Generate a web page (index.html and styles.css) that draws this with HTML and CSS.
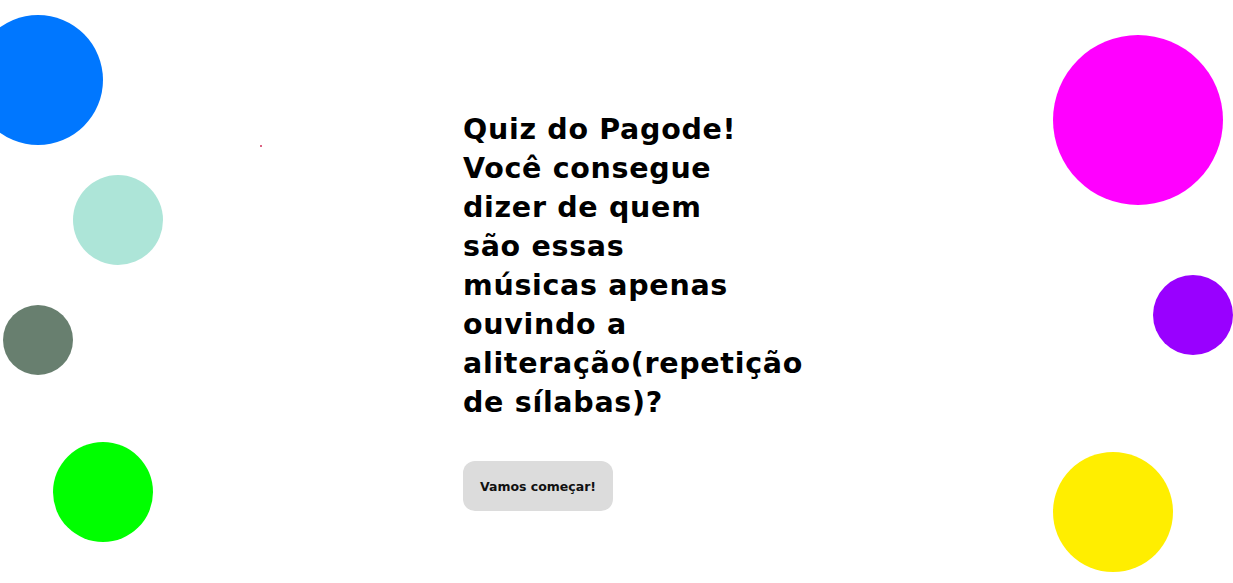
FILE: index.html
```html
<!DOCTYPE html>
<html lang="pt-BR">
<head>
<meta charset="utf-8">
<title>Quiz do Pagode</title>
<link rel="stylesheet" href="styles.css">
</head>
<body>
<div class="decor">
  <span class="ball ball-blue"></span>
  <span class="ball ball-teal"></span>
  <span class="ball ball-gray"></span>
  <span class="ball ball-green"></span>
  <span class="ball ball-magenta"></span>
  <span class="ball ball-purple"></span>
  <span class="ball ball-yellow"></span>
  <span class="dot"></span>
</div>
<main class="intro">
  <h1 class="title">Quiz do Pagode!<br>Você consegue<br>dizer de quem<br>são essas<br>músicas apenas<br>ouvindo a<br>aliteração(repetição<br>de sílabas)?</h1>
  <button class="start">Vamos começar!</button>
</main>
</body>
</html>
```
FILE: styles.css
```css
html, body {
  margin: 0;
  padding: 0;
  background: #fff;
  height: 100%;
  overflow: hidden;
}
body {
  font-family: "DejaVu Sans", "Open Sans", sans-serif;
  color: #000;
  position: relative;
}
.decor {
  position: absolute;
  inset: 0;
  pointer-events: none;
}
.ball {
  position: absolute;
  border-radius: 50%;
  display: block;
}
.ball-blue { left: -27px; top: 15px; width: 130px; height: 130px; background: #0077ff; }
.ball-teal { left: 73px; top: 175px; width: 90px; height: 90px; background: #ade5d8; }
.ball-gray { left: 3px; top: 305px; width: 70px; height: 70px; background: #687f6f; }
.ball-green { left: 53px; top: 442px; width: 100px; height: 100px; background: #00ff00; }
.ball-magenta { left: 1053px; top: 35px; width: 170px; height: 170px; background: #ff00ff; }
.ball-purple { left: 1153px; top: 275px; width: 80px; height: 80px; background: #9900ff; }
.ball-yellow { left: 1053px; top: 452px; width: 120px; height: 120px; background: #ffee00; }
.dot { position: absolute; left: 260px; top: 145px; width: 2px; height: 2px; background: #d0305a; border-radius: 50%; }

.intro {
  width: 307px;
  margin: 0 auto;
  padding-top: 110px;
  display: flex;
  flex-direction: column;
  align-items: flex-start;
}
.title {
  margin: 0;
  font-size: 28.5px;
  letter-spacing: 0.7px;
  font-weight: 700;
  line-height: 39px;
  white-space: nowrap;
}
.start {
  margin-top: 39px;
  width: 150px;
  height: 50px;
  border: none;
  border-radius: 12px;
  background: #dcdcdc;
  color: #111;
  font-family: "DejaVu Sans", "Open Sans", sans-serif;
  font-weight: 700;
  font-size: 12.5px;
  padding: 0;
}
```
